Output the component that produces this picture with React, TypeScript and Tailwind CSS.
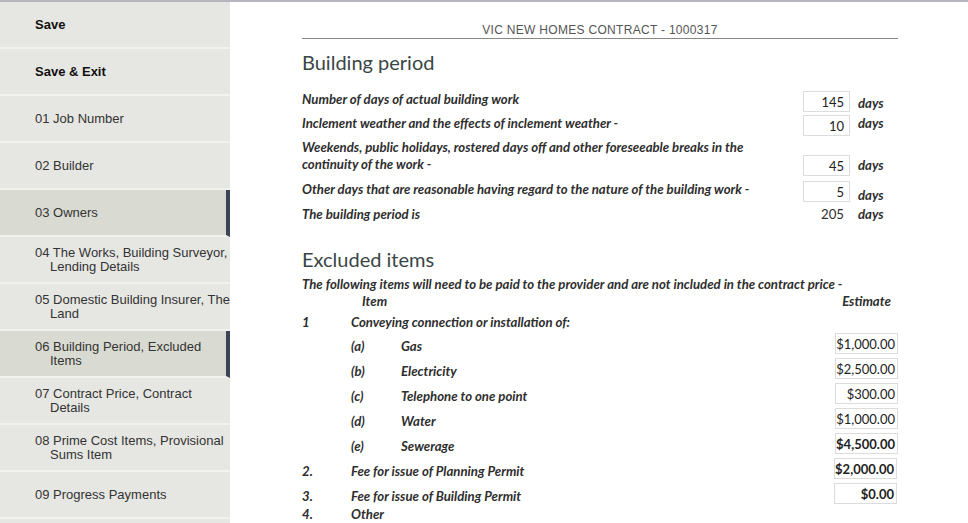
import React from 'react';

const navItems = [
  { lines: ['Save'], bold: true },
  { lines: ['Save & Exit'], bold: true },
  { lines: ['01 Job Number'] },
  { lines: ['02 Builder'] },
  { lines: ['03 Owners'], active: true },
  { lines: ['04 The Works, Building Surveyor,', 'Lending Details'] },
  { lines: ['05 Domestic Building Insurer, The', 'Land'] },
  { lines: ['06 Building Period, Excluded', 'Items'], active: true },
  { lines: ['07 Contract Price, Contract', 'Details'] },
  { lines: ['08 Prime Cost Items, Provisional', 'Sums Item'] },
  { lines: ['09 Progress Payments'] },
  { lines: [] as string[] },
];

const periodRows = [
  { label: 'Number of days of actual building work', value: '145', h: 'h-[24px]', days: 'mt-[4px]' },
  { label: 'Inclement weather and the effects of inclement weather -', value: '10', h: 'h-[24px]', days: 'mb-[4px]' },
  {
    label: 'Weekends, public holidays, rostered days off and other foreseeable breaks in the continuity of the work -',
    value: '45',
    h: 'h-[42px]',
    days: 'mt-[14px]',
    input: 'mt-[15px]',
  },
  {
    label: 'Other days that are reasonable having regard to the nature of the building work -',
    value: '5',
    h: 'h-[24px]',
    days: 'mt-[8px]',
  },
];

const utilities = [
  { key: '(a)', label: 'Gas', amount: '$1,000.00' },
  { key: '(b)', label: 'Electricity', amount: '$2,500.00' },
  { key: '(c)', label: 'Telephone to one point', amount: '$300.00' },
  { key: '(d)', label: 'Water', amount: '$1,000.00' },
  { key: '(e)', label: 'Sewerage', amount: '$4,500.00', bold: true },
];

function DaysInput({ value }: { value: string }) {
  return (
    <div className="h-[21px] w-[47px] border border-[#dcdcdc] bg-white pr-[5px] text-right text-[13px] leading-[20px] font-normal not-italic text-[#222]">
      {value}
    </div>
  );
}

function Money({ value, bold }: { value: string; bold?: boolean }) {
  return (
    <div
      className={`h-[21px] w-[63px] border border-[#dcdcdc] bg-white pr-[2px] text-right text-[13px] leading-[20px] not-italic text-[#222] ${bold ? 'font-bold' : 'font-normal'}`}
    >
      {value}
    </div>
  );
}

export default function App() {
  return (
    <div className="flex h-[523px] w-[968px] overflow-hidden border-t-2 border-[#b6b6be] bg-white">
      <nav className="w-[230px] shrink-0 bg-[#e6e7e2] font-['Liberation_Sans',Arial,sans-serif] text-[13px] text-[#333]">
        {navItems.map((item, i) => (
          <div
            key={i}
            className={`flex h-[47px] flex-col justify-center border-b-2 border-[#f1f1ee] pl-[35px] leading-[14px] whitespace-nowrap ${
              item.active ? 'border-r-4 border-r-[#3d4555] bg-[#d9dbd2]' : ''
            } ${item.bold ? 'font-bold text-[#111]' : ''}`}
          >
            {item.lines.map((line, j) => (
              <span key={j} className={j > 0 ? 'pl-[15px]' : ''}>
                {line}
              </span>
            ))}
          </div>
        ))}
      </nav>

      <main className="ml-[72px] w-[596px] font-['Lato','Open_Sans',sans-serif] text-[#2e2e2e]">
        <div className="pt-[21px] pb-[1px] text-center font-['Liberation_Sans',Arial,sans-serif] text-[12px] leading-[14px] tracking-[0.3px] text-[#555]">
          VIC NEW HOMES CONTRACT - 1000317
        </div>
        <div className="border-b border-[#888]" />

        <h2 className="mt-[10px] text-[20px] leading-[26px] text-[#3a4646]">Building period</h2>

        <div className="mt-[14px] flex flex-col text-[13.2px] font-bold italic">
          {periodRows.map((row) => (
            <div key={row.label} className={`flex ${row.h} items-center`}>
              <div className="w-[460px] pb-[4px] leading-[17px]">{row.label}</div>
              <div className={`ml-[41px] ${row.input ?? ''}`}>
                <DaysInput value={row.value} />
              </div>
              <div className={`ml-[8px] leading-[17px] ${row.days}`}>days</div>
            </div>
          ))}
          <div className="flex h-[23px] items-center">
            <div className="w-[460px] leading-[17px]">The building period is</div>
            <div className="ml-[41px] w-[47px] pr-[6px] text-right font-normal not-italic">205</div>
            <div className="ml-[8px]">days</div>
          </div>
        </div>

        <h2 className="mt-[20px] text-[20px] leading-[26px] text-[#3a4646]">Excluded items</h2>

        <div className="text-[13.2px] font-bold italic">
          <div className="mt-[3px] leading-[18px]">
            The following items will need to be paid to the provider and are not included in the contract price -
          </div>
          <div className="flex h-[19px] items-end">
            <div className="ml-[60px] flex-1">Item</div>
            <div className="w-[63px] text-center">Estimate</div>
          </div>
          <div className="flex h-[21px] items-end">
            <div className="w-[49px]">1</div>
            <div>Conveying connection or installation of:</div>
          </div>
          {utilities.map((u) => (
            <div key={u.key} className="flex h-[25px] items-start">
              <div className="ml-[49px] w-[50px] pt-[5px] leading-[17px]">{u.key}</div>
              <div className="flex-1 pt-[5px] leading-[17px]">{u.label}</div>
              <Money value={u.amount} bold={u.bold} />
            </div>
          ))}
          {[
            ['2.', 'Fee for issue of Planning Permit', '$2,000.00'],
            ['3.', 'Fee for issue of Building Permit', '$0.00'],
          ].map(([n, label, amount]) => (
            <div key={n} className="flex h-[25px] items-start">
              <div className="w-[49px] pt-[5px] leading-[17px]">{n}</div>
              <div className="flex-1 pt-[5px] leading-[17px]">{label}</div>
              <div className="mr-[1px]">
                <Money value={amount} bold />
              </div>
            </div>
          ))}
          <div className="-mt-[2px] flex">
            <div className="w-[49px] leading-[17px]">4.</div>
            <div className="leading-[17px]">Other</div>
          </div>
        </div>
      </main>
    </div>
  );
}
